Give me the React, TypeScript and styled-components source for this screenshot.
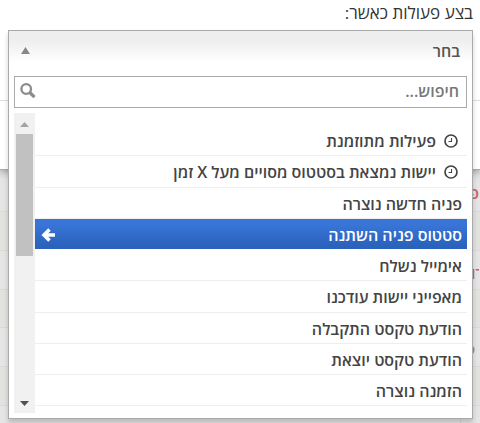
import React, { useState } from "react";
import styled, { createGlobalStyle } from "styled-components";

const GlobalStyle = createGlobalStyle`
  *, *::before, *::after { box-sizing: border-box; }
  html, body { margin: 0; height: 100%; }
  body {
    background: #e3e3e3;
    color: #444;
    font-family: "Open Sans", "Noto Sans", sans-serif;
    font-size: 16px;
    overflow: hidden;
  }
  #root { height: 100%; }
`;

const Page = styled.main`
  height: 100%;
  overflow: hidden;
`;

const Dialog = styled.section`
  position: relative;
  background: #fff;
  border-bottom: 1px solid #aaa;
  box-shadow: 0 2px 8px rgba(0, 0, 0, 0.35);
  height: 170px;
`;

const Field = styled.div`
  height: 101px;
  padding: 0 7px 0 8px;
  border-bottom: 1px solid #ddd;
`;

const FieldLabel = styled.label`
  display: block;
  height: 30px;
  font-size: 17px;
  line-height: 26px;
  color: #333;
`;

const SelectBox = styled.div`
  position: relative;
`;

const Dropdown = styled.div`
  position: absolute;
  z-index: 1;
  inset: 0 0 auto;
  background: #fff;
  border: 1px solid #aaa;
  box-shadow: 0 4px 5px rgba(0, 0, 0, 0.18);
  padding: 0 5px 5px;
`;

const Toggle = styled.button`
  display: flex;
  align-items: center;
  justify-content: space-between;
  width: calc(100% + 10px);
  height: 45px;
  margin: 0 -5px;
  padding: 0 12px 6px;
  border: 0;
  background: linear-gradient(#eee 20%, #fff 70%);
  color: #555;
  font: 600 16px "Open Sans", "Noto Sans", sans-serif;
`;

const SearchBox = styled.div`
  display: flex;
  align-items: center;
  height: 32px;
  padding: 0 7px 2px 5px;
  border: 1px solid #aaa;
`;

const SearchInput = styled.input`
  flex: 1;
  min-width: 0;
  padding: 0;
  border: 0;
  outline: 0;
  background: none;
  color: #444;
  font: 600 16px "Open Sans", "Noto Sans", sans-serif;
  &::placeholder { color: #777; opacity: 1; }
`;

const ListArea = styled.div`
  display: flex;
  height: 300px;
  margin-top: 5px;
`;

const Options = styled.ul`
  flex: 1;
  min-width: 0;
  margin: 0;
  padding: 12px 0 0;
  list-style: none;
  overflow: hidden;
`;

const Option = styled.li<{ $active?: boolean; $timed?: boolean }>`
  display: flex;
  align-items: center;
  gap: 8px;
  height: 31px;
  padding: 1px ${(p) => (p.$timed ? 9 : 5)}px 0 6px;
  border-bottom: 1px solid ${(p) => (p.$active ? "#fff" : "#eee")};
  background: ${(p) => (p.$active ? "linear-gradient(#3875d7 20%, #2a62bc 90%) padding-box" : "none")};
  color: ${(p) => (p.$active ? "#fff" : "#444")};
  font-weight: 600;
  line-height: 24px;
  white-space: nowrap;
  &:nth-child(4n + 2) { height: 32px; }
  svg:last-child { margin-inline-start: auto; }
`;

const Scrollbar = styled.div`
  display: flex;
  flex-direction: column;
  align-items: center;
  width: 21px;
  background: #f1f1f1;
`;

const ScrollButton = styled.button`
  display: grid;
  place-items: center;
  width: 21px;
  height: 21px;
  padding: 2px 0 0;
  border: 0;
  background: none;
`;

const ScrollThumb = styled.div`
  width: 17px;
  height: 122px;
  margin-bottom: auto;
  background: #c1c1c1;
`;

const Backdrop = styled.table`
  width: 100%;
  border-collapse: collapse;
  table-layout: fixed;
`;

const BackdropRow = styled.tr<{ $height: number }>`
  height: ${(p) => p.$height}px;
  background: #e5e5e5;
  border-bottom: 1px solid #dadada;
  &:nth-child(even) { background: #e2e2df; }
  &:last-child > td:first-child { border-left: 1px solid #d4d4d4; }
`;

const EdgeCell = styled.td`
  width: 20px;
  padding: 6px 1px 0 0;
  overflow: hidden;
  color: #d06060;
  white-space: nowrap;
  font-weight: 600;
  line-height: 24px;
  svg { display: block; }
`;

const ClippedText = styled.div`
  width: 8px;
  direction: ltr;
  overflow: hidden;
`;

const BodyCell = styled.td`
  padding: 8px 26px 0 0;
  color: #777;
  line-height: 24px;
`;

const Clock = () => (
  <svg width="14" height="14" viewBox="0 0 14 14" fill="none" stroke="#444" aria-hidden="true">
    <circle cx="7" cy="7" r="6" strokeWidth="1.7" />
    <path d="M7.5 4v3.5H4.5" strokeWidth="1.1" />
  </svg>
);

const BackArrow = () => (
  <svg width="15" height="14" viewBox="0 0 15 14" fill="none" stroke="#fff" aria-hidden="true">
    <path d="M8.5 1.5 3 7l5.500 5.500M3.500 7H14" strokeWidth="3.600" />
  </svg>
);

const Magnifier = () => (
  <svg width="16" height="16" viewBox="0 0 16 16" fill="none" stroke="#8c8c8c" aria-hidden="true">
    <circle cx="6.200" cy="6" r="4.800" strokeWidth="2.300" />
    <path d="m9.800 9.500 4.700 4.700" strokeWidth="3.200" />
  </svg>
);

const Badge = () => (
  <svg width="12" height="14" viewBox="0 0 12 14" fill="none" stroke="#b87590" aria-hidden="true">
    <circle cx="1" cy="7" r="5.500" strokeWidth="2" />
  </svg>
);

const Triangle = ({ down, color, height = 5 }: { down?: boolean; color: string; height?: number }) => (
  <svg width="9" height={height} viewBox="0 0 10 6" preserveAspectRatio="none" aria-hidden="true">
    <path d={down ? "M0 0h10L5 6z" : "M0 6h10L5 0z"} fill={color} />
  </svg>
);

const options = [
  { text: "פעילות מתוזמנת", timed: true },
  { text: "יישות נמצאת בסטטוס מסויים מעל X זמן", timed: true },
  { text: "פניה חדשה נוצרה" },
  { text: "סטטוס פניה השתנה" },
  { text: "אימייל נשלח" },
  { text: "מאפייני יישות עודכנו" },
  { text: "הודעת טקסט התקבלה" },
  { text: "הודעת טקסט יוצאת" },
  { text: "הזמנה נוצרה" },
];

const backdropRows = [
  { height: 41, edge: "פ" },
  { height: 39 },
  { height: 39, edge: <ClippedText>רו</ClippedText> },
  { height: 38 },
  { height: 39, edge: <Badge /> },
  { height: 39 },
  { height: 39, body: "ל" },
];

export default function App() {
  const [active, setActive] = useState(3);
  const [query, setQuery] = useState("");

  return (
    <Page dir="rtl" lang="he">
      <GlobalStyle />
      <Dialog>
        <Field>
          <FieldLabel htmlFor="trigger">בצע פעולות כאשר:</FieldLabel>
          <SelectBox>
            <Dropdown>
              <Toggle id="trigger" type="button" aria-haspopup="listbox" aria-expanded="true">
                <span>בחר</span>
                <Triangle color="#888" height={7} />
              </Toggle>
              <SearchBox>
                <SearchInput
                  type="text"
                  aria-label="חיפוש"
                  placeholder="חיפוש..."
                  value={query}
                  onChange={(e) => setQuery(e.target.value)}
                />
                <Magnifier />
              </SearchBox>
              <ListArea>
                <Options role="listbox">
                  {options.map((option, i) => (
                    <Option
                      key={option.text}
                      role="option"
                      aria-selected={i === active}
                      $active={i === active}
                      $timed={option.timed}
                      onMouseEnter={() => setActive(i)}
                    >
                      {option.timed && <Clock />}
                      <span>{option.text}</span>
                      {i === active && <BackArrow />}
                    </Option>
                  ))}
                </Options>
                <Scrollbar>
                  <ScrollButton type="button" aria-label="גלילה למעלה">
                    <Triangle color="#a3a3a3" />
                  </ScrollButton>
                  <ScrollThumb />
                  <ScrollButton type="button" aria-label="גלילה למטה">
                    <Triangle down color="#505050" />
                  </ScrollButton>
                </Scrollbar>
              </ListArea>
            </Dropdown>
          </SelectBox>
        </Field>
      </Dialog>
      <Backdrop>
        <tbody>
          {backdropRows.map((row, i) => (
            <BackdropRow key={i} $height={row.height}>
              <EdgeCell>{row.edge}</EdgeCell>
              <BodyCell>{row.body}</BodyCell>
            </BackdropRow>
          ))}
        </tbody>
      </Backdrop>
    </Page>
  );
}
